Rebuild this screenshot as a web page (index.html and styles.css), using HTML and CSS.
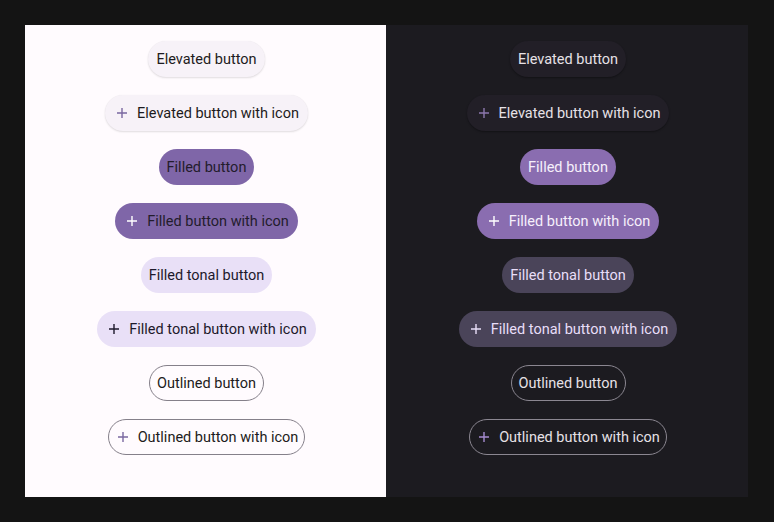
FILE: index.html
```html
<!DOCTYPE html>
<html>
<head>
<meta charset="utf-8">
<link rel="stylesheet" href="styles.css">
</head>
<body>
<div class="stage">
  <section class="panel light">
    <button class="btn elevated">Elevated button</button>
    <button class="btn elevated icon"><svg class="plus" viewBox="0 0 18 18"><path d="M9 4v10M4 9h10"/></svg><span>Elevated button with icon</span></button>
    <button class="btn filled">Filled button</button>
    <button class="btn filled icon"><svg class="plus" viewBox="0 0 18 18"><path d="M9 4v10M4 9h10"/></svg><span>Filled button with icon</span></button>
    <button class="btn tonal">Filled tonal button</button>
    <button class="btn tonal icon"><svg class="plus" viewBox="0 0 18 18"><path d="M9 4v10M4 9h10"/></svg><span>Filled tonal button with icon</span></button>
    <button class="btn outlined">Outlined button</button>
    <button class="btn outlined icon"><svg class="plus" viewBox="0 0 18 18"><path d="M9 4v10M4 9h10"/></svg><span>Outlined button with icon</span></button>
  </section>
  <section class="panel dark">
    <button class="btn elevated">Elevated button</button>
    <button class="btn elevated icon"><svg class="plus" viewBox="0 0 18 18"><path d="M9 4v10M4 9h10"/></svg><span>Elevated button with icon</span></button>
    <button class="btn filled">Filled button</button>
    <button class="btn filled icon"><svg class="plus" viewBox="0 0 18 18"><path d="M9 4v10M4 9h10"/></svg><span>Filled button with icon</span></button>
    <button class="btn tonal">Filled tonal button</button>
    <button class="btn tonal icon"><svg class="plus" viewBox="0 0 18 18"><path d="M9 4v10M4 9h10"/></svg><span>Filled tonal button with icon</span></button>
    <button class="btn outlined">Outlined button</button>
    <button class="btn outlined icon"><svg class="plus" viewBox="0 0 18 18"><path d="M9 4v10M4 9h10"/></svg><span>Outlined button with icon</span></button>
  </section>
</div>
</body>
</html>
```
FILE: styles.css
```css
html, body {
  margin: 0;
  padding: 0;
  background: #141414;
}
.stage {
  display: flex;
  padding: 25px 26px 25px 25px;
  width: 774px;
  height: 522px;
  box-sizing: border-box;
}
.panel {
  height: 472px;
  display: flex;
  flex-direction: column;
  align-items: center;
  padding-top: 16px;
  padding-left: 2px;
  gap: 18px;
  box-sizing: border-box;
}
.panel.light { width: 361px; background: #fffbfe; }
.panel.dark { width: 362px; background: #1c1b20; }

.btn {
  height: 36px;
  border-radius: 18px;
  border: none;
  padding: 0 8px;
  font-family: Roboto, "Liberation Sans", sans-serif;
  font-size: 14.5px;
  font-weight: 400;
  display: inline-flex;
  align-items: center;
  justify-content: center;
  gap: 6px;
  box-sizing: border-box;
  white-space: nowrap;
  cursor: pointer;
}
.btn.icon { padding: 0 9px 0 8px; }
.btn.outlined { padding: 0 7px; }
.btn.outlined.icon { padding: 0 6px 0 5px; }
.plus {
  width: 18px;
  height: 18px;
  flex: none;
}
.plus path {
  fill: none;
  stroke: currentColor;
  stroke-width: 1.4;
}

/* light */
.light .btn { color: #1d1b20; }
.light .elevated {
  background: #f7f2f8;
  box-shadow: 0 1px 2px rgba(0,0,0,0.12), 0 0 1px rgba(0,0,0,0.06);
}
.light .elevated .plus { color: #7a68a0; }
.light .filled { background: #7f66a8; color: #231c2c; }
.light .filled .plus { color: #ffffff; }
.light .tonal { background: #e9e0f7; color: #1d192b; }
.light .tonal .plus { color: #1d192b; }
.light .outlined { background: transparent; border: 1.3px solid #85808a; }
.light .outlined .plus { color: #7a68a0; }

/* dark */
.dark .btn { color: #e6e1e6; }
.dark .elevated {
  background: #221f27;
  box-shadow: 0 1px 2px rgba(0,0,0,0.35);
}
.dark .elevated .plus { color: #8c77ad; }
.dark .filled { background: #8a6db0; color: #f6f0fb; }
.dark .filled .plus { color: #ffffff; }
.dark .tonal { background: #4a4459; color: #e8def8; }
.dark .tonal .plus { color: #e8def8; }
.dark .outlined { background: transparent; border: 1.3px solid #8b8791; }
.dark .outlined .plus { color: #a58bd0; }
```
